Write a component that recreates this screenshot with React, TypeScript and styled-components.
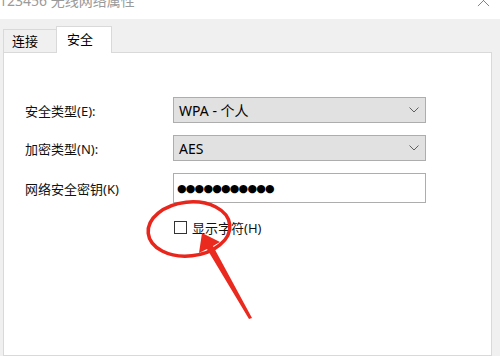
import styled, { createGlobalStyle } from "styled-components";

const GlobalStyle = createGlobalStyle`
  body {
    margin: 0;
    background: #f0f0f0;
    font-family: "Noto Sans", "Noto Sans CJK SC", sans-serif;
  }
`;

export default function App() {
  return (
    <>
      <GlobalStyle />
      <Window>
        <TitleBar>
          <Title>123456 无线网络属性</Title>
          <CloseIcon viewBox="0 0 14 14">
            <path d="M1 1 L13 13 M13 1 L1 13" />
          </CloseIcon>
        </TitleBar>
        <Body>
          <TabRow>
            <Tab>连接</Tab>
            <Tab active>安全</Tab>
          </TabRow>
          <Page>
            <Form>
              <Label>安全类型(E):</Label>
              <Select>
                WPA - 个人
                <Chevron />
              </Select>
              <Label>加密类型(N):</Label>
              <Select>
                AES
                <Chevron />
              </Select>
              <Label>网络安全密钥(K)</Label>
              <KeyInput>●●●●●●●●●●●</KeyInput>
              <span />
              <CheckRow>
                <CheckBox />
                显示字符(H)
              </CheckRow>
            </Form>
          </Page>
        </Body>
        <Annotation viewBox="0 0 500 356">
          <ellipse cx="189" cy="229" rx="41" ry="27" transform="rotate(-6 189 229)" />
          <polygon points="202,233 220,242 213,246 252,318 249,319 207,249 199,253" />
        </Annotation>
      </Window>
    </>
  );
}

function Chevron() {
  return (
    <ChevronSvg viewBox="0 0 10 6">
      <path d="M0.5 0.5 L5 5 L9.5 0.5" />
    </ChevronSvg>
  );
}

const Window = styled.div`
  position: relative;
  width: 500px;
  height: 356px;
  overflow: hidden;
  display: flex;
  flex-direction: column;
`;

const TitleBar = styled.div`
  height: 19px;
  flex: none;
  background: #fff;
  display: flex;
  justify-content: space-between;
  align-items: flex-start;
  overflow: hidden;
  padding-right: 10px;
`;

const Title = styled.div`
  margin-top: -7px;
  margin-left: -1px;
  font-size: 14px;
  line-height: 16px;
  color: #9a9a9a;
`;

const CloseIcon = styled.svg`
  width: 13px;
  height: 13px;
  margin-top: -6px;
  fill: none;
  stroke: #7a7a7a;
  stroke-width: 1;
`;

const Body = styled.div`
  flex: 1;
  display: flex;
  flex-direction: column;
  padding: 0 8px 0 3px;
  background: #f0f0f0;
`;

const TabRow = styled.div`
  height: 33px;
  flex: none;
  display: flex;
  align-items: flex-end;
`;

const Tab = styled.div<{ active?: boolean }>`
  position: relative;
  z-index: 1;
  box-sizing: border-box;
  width: ${({ active }) => (active ? "56px" : "54px")};
  height: ${({ active }) => (active ? "27px" : "23px")};
  margin-bottom: ${({ active }) => (active ? "-1px" : "0")};
  margin-left: ${({ active }) => (active ? "-1px" : "0")};
  padding-top: ${({ active }) => (active ? "3px" : "2px")};
  padding-left: ${({ active }) => (active ? "10px" : "8px")};
  background: ${({ active }) => (active ? "#fff" : "#f0f0f0")};
  border: 1px solid #d9d9d9;
  border-bottom: none;
  font-size: 13px;
  line-height: 18px;
  color: #000;
`;

const Page = styled.div`
  flex: 1;
  background: #fff;
  border: 1px solid #d9d9d9;
  padding: 44px 0 0 21px;
`;

const Form = styled.div`
  display: grid;
  grid-template-columns: 148px 253px;
  grid-auto-rows: auto;
  row-gap: 12px;
  align-items: center;
`;

const Label = styled.div`
  font-size: 13px;
  color: #111;
`;

const Select = styled.div`
  box-sizing: border-box;
  height: 26px;
  display: flex;
  align-items: center;
  justify-content: space-between;
  padding: 0 6px 0 5px;
  background: #e1e1e1;
  border: 1px solid #adadad;
  font-size: 14px;
  color: #000;
`;

const ChevronSvg = styled.svg`
  width: 10px;
  height: 6px;
  fill: none;
  stroke: #606060;
  stroke-width: 1;
`;

const KeyInput = styled.div`
  box-sizing: border-box;
  height: 30px;
  display: flex;
  align-items: center;
  padding-left: 3px;
  background: #fff;
  border: 1px solid #adadad;
  font-family: "DejaVu Sans", sans-serif;
  font-size: 11px;
  letter-spacing: -0.8px;
  color: #000;
`;

const CheckRow = styled.div`
  margin-top: 3px;
  display: flex;
  align-items: center;
  gap: 5px;
  font-size: 13px;
  color: #111;
  margin-left: 1px;
`;

const CheckBox = styled.span`
  box-sizing: border-box;
  width: 13px;
  height: 13px;
  border: 1px solid #333;
  background: #fff;
`;

const Annotation = styled.svg`
  position: absolute;
  inset: 0;
  width: 500px;
  height: 356px;
  pointer-events: none;

  ellipse {
    fill: none;
    stroke: #e8261c;
    stroke-width: 3.5;
  }

  polygon {
    fill: #ea2a1f;
  }
`;
